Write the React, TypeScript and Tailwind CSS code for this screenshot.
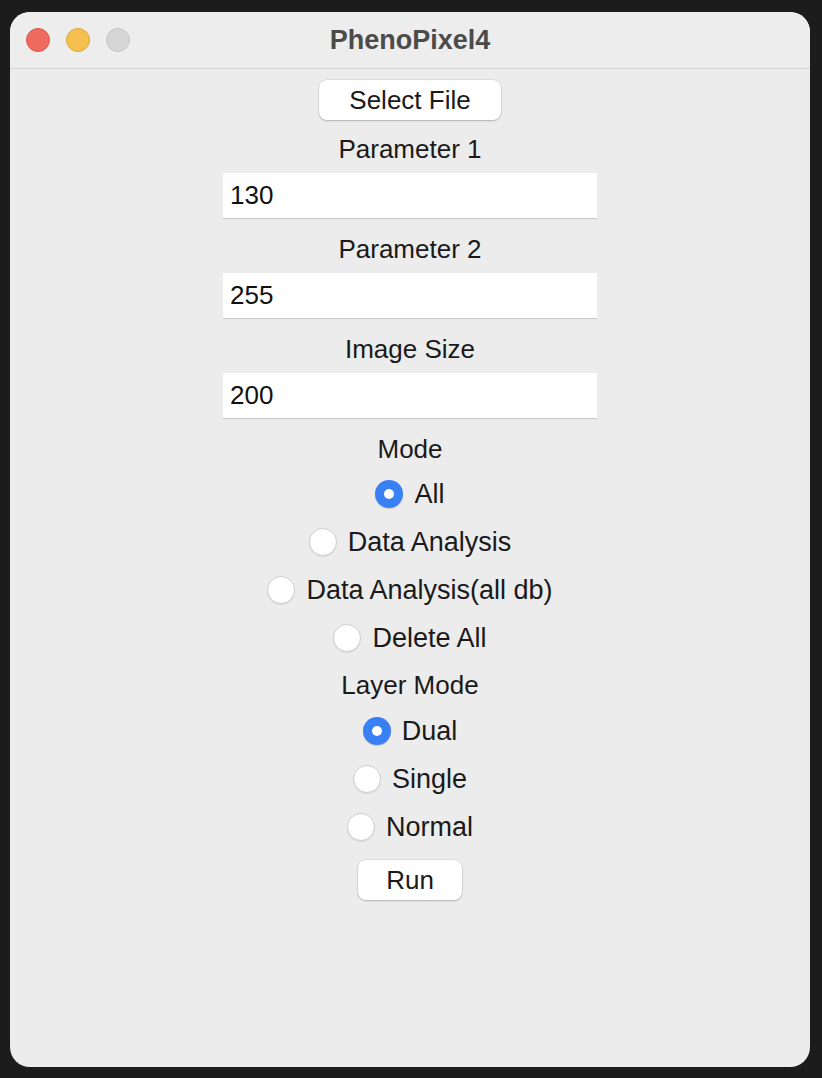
import { useState } from "react";

const font = "font-['Liberation_Sans','Helvetica',Arial,sans-serif]";

function Radio({ label, checked, onClick }: { label: string; checked: boolean; onClick: () => void }) {
  return (
    <button onClick={onClick} className="flex h-[48px] items-center gap-[11px]">
      {checked ? (
        <span className="flex h-[28px] w-[28px] items-center justify-center rounded-full bg-[#3a80f5] shadow-[0_1px_1px_rgba(0,0,0,0.15)]">
          <span className="h-[10px] w-[10px] rounded-full bg-white" />
        </span>
      ) : (
        <span className="h-[28px] w-[28px] rounded-full border border-[#cfcfcf] bg-white shadow-[0_1px_1px_rgba(0,0,0,0.08)]" />
      )}
      <span className="text-[27px] leading-[30px] text-[#1a1a1a]">{label}</span>
    </button>
  );
}

function Field({ label, value, top }: { label: string; value: string; top: string }) {
  return (
    <>
      <div className={`${top} h-[30px] text-[26px] leading-[30px] text-[#1a1a1a]`}>{label}</div>
      <input
        defaultValue={value}
        className="mt-[9px] h-[45px] w-[374px] bg-white pl-[7px] text-[26px] text-[#111] shadow-[0_1px_0_#c6c6c6] outline-none"
      />
    </>
  );
}

export default function App() {
  const [mode, setMode] = useState("All");
  const [layer, setLayer] = useState("Dual");

  const modes = ["All", "Data Analysis", "Data Analysis(all db)", "Delete All"];
  const layers = ["Dual", "Single", "Normal"];

  return (
    <div className={`h-[1078px] w-[822px] bg-[#1c1c1c] pl-[10px] pr-[12px] pt-[12px] ${font}`}>
      <div className="flex h-[1055px] flex-col overflow-hidden rounded-[20px] bg-[#ececec]">
        {/* title bar */}
        <div className="grid h-[57px] shrink-0 grid-cols-[1fr_auto_1fr] items-center border-b border-[#d2d2d2] bg-[#ededed]">
          <div className="flex items-center gap-[16px] pl-[16px]">
            <span className="h-[24px] w-[24px] rounded-full border border-[#d9574d] bg-[#ef6b5f]" />
            <span className="h-[24px] w-[24px] rounded-full border border-[#dba53a] bg-[#f6c04f]" />
            <span className="h-[24px] w-[24px] rounded-full border border-[#c4c4c4] bg-[#d6d6d6]" />
          </div>
          <div className="text-[27px] font-bold text-[#4b4b4b]">PhenoPixel4</div>
          <div />
        </div>

        {/* content */}
        <div className="flex flex-col items-center">
          <button className="mt-[11px] h-[40px] w-[182px] rounded-[8px] bg-white text-[26px] text-[#1a1a1a] shadow-[0_0_0_0.5px_rgba(0,0,0,0.12),0_1px_2px_rgba(0,0,0,0.2)]">
            Select File
          </button>

          <Field label="Parameter 1" value="130" top="mt-[14px]" />
          <Field label="Parameter 2" value="255" top="mt-[16px]" />
          <Field label="Image Size" value="200" top="mt-[16px]" />

          <div className="mt-[16px] h-[30px] text-[26px] leading-[30px] text-[#1a1a1a]">Mode</div>
          <div className="mt-[6px] flex flex-col items-center">
            {modes.map((m) => (
              <Radio key={m} label={m} checked={mode === m} onClick={() => setMode(m)} />
            ))}
          </div>

          <div className="mt-[8px] h-[30px] text-[26px] leading-[30px] text-[#1a1a1a]">Layer Mode</div>
          <div className="mt-[7px] flex flex-col items-center">
            {layers.map((l) => (
              <Radio key={l} label={l} checked={layer === l} onClick={() => setLayer(l)} />
            ))}
          </div>

          <button className="mt-[9px] h-[40px] w-[104px] rounded-[8px] bg-white text-[26px] text-[#1a1a1a] shadow-[0_0_0_0.5px_rgba(0,0,0,0.12),0_1px_2px_rgba(0,0,0,0.2)]">
            Run
          </button>
        </div>
      </div>
    </div>
  );
}
